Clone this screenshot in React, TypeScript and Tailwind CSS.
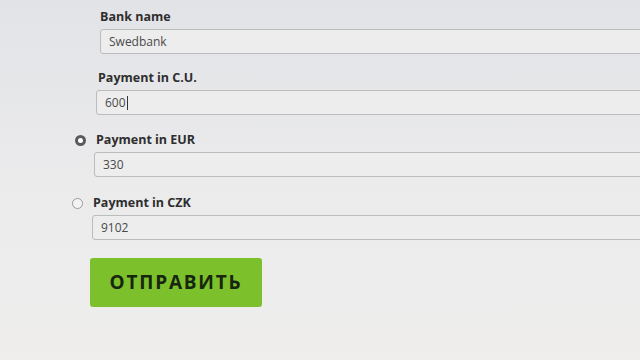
import React from 'react';

const Field = ({ value, left, cursor }: { value: string; left: string; cursor?: boolean }) => (
  <div className={`${left} mt-[3px] h-[25px] w-[620px] rounded-[3px] border border-[#bcbcbc] bg-[#ededed] pl-[8px] flex items-center text-[12px] text-[#4a4a4a]`}>
    <span>{value}</span>
    {cursor && <span className="ml-[1px] h-[14px] w-px bg-[#333]"></span>}
  </div>
);

const App = () => {
  return (
    <div
      className="w-[640px] h-[360px] overflow-hidden bg-gradient-to-b from-[#e2e3e7] via-[#ebebec] to-[#efeeed]"
      style={{ fontFamily: '"Open Sans", "Liberation Sans", sans-serif' }}
    >
      <div className="flex flex-col pt-[8px]">
        {/* Bank name */}
        <div className="ml-[100px] h-[18px] text-[12.5px] font-bold text-[#2e2e2e] leading-[18px]">Bank name</div>
        <Field value="Swedbank" left="ml-[100px]" />

        {/* Payment in C.U. */}
        <div className="ml-[98px] mt-[15px] h-[18px] text-[12.5px] font-bold text-[#2e2e2e] leading-[18px]">Payment in C.U.</div>
        <Field value="600" left="ml-[96px]" cursor />

        {/* Payment in EUR */}
        <div className="ml-[75px] mt-[16px] h-[18px] flex items-center gap-[10px]">
          <span className="w-[11px] h-[11px] rounded-full border-[3px] border-[#5a5a5a] bg-white"></span>
          <span className="text-[12.5px] font-bold text-[#2e2e2e] leading-[18px]">Payment in EUR</span>
        </div>
        <Field value="330" left="ml-[94px]" />

        {/* Payment in CZK */}
        <div className="ml-[72px] mt-[17px] h-[18px] flex items-center gap-[10px]">
          <span className="w-[11px] h-[11px] rounded-full border border-[#9a9a9a] bg-[#f4f4f4]"></span>
          <span className="text-[12.5px] font-bold text-[#2e2e2e] leading-[18px]">Payment in CZK</span>
        </div>
        <Field value="9102" left="ml-[92px]" />

        <button className="ml-[90px] mt-[18px] w-[172px] h-[49px] rounded-[3px] bg-[#7cc02c] text-[#17260e] text-[19px] font-bold tracking-[1.8px] flex items-center justify-center">
          ОТПРАВИТЬ
        </button>
      </div>
    </div>
  );
};

export default App;
